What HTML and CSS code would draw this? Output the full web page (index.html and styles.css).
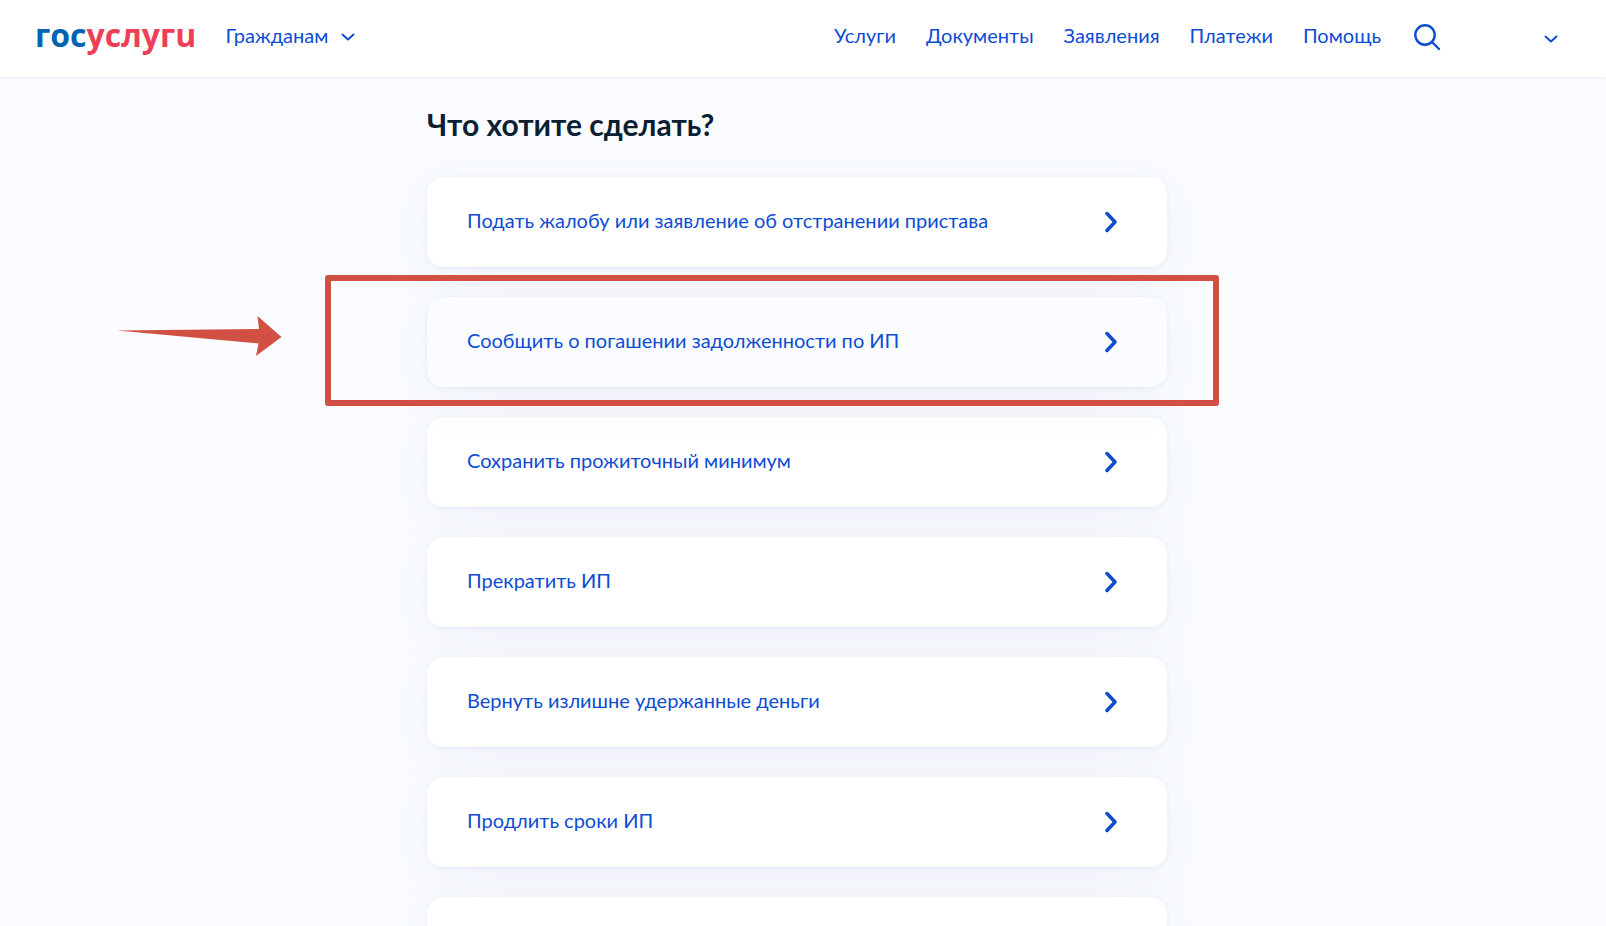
FILE: index.html
```
<!DOCTYPE html>
<html lang="ru">
<head>
    <meta charset="UTF-8">
    <title>Госуслуги</title>
    <link rel="stylesheet" href="styles.css">
</head>
<body>
    <header class="header">
        <a href="#" class="logo" aria-label="Госуслуги"><span class="logo-blue">гос</span>услугu</a>
        <button type="button" class="role">
            Гражданам
            <svg class="arrow" viewBox="0 0 14 8"><path d="M1.5 1.5 7 6.5 12.5 1.5"/></svg>
        </button>

        <nav class="menu">
            <a href="#">Услуги</a>
            <a href="#">Документы</a>
            <a href="#">Заявления</a>
            <a href="#">Платежи</a>
            <a href="#">Помощь</a>
        </nav>
        <button type="button" class="search" aria-label="Поиск">
            <svg viewBox="0 0 28 28"><circle cx="12" cy="12" r="9.7"/><path d="M19 19l7 7"/></svg>
        </button>
        <button type="button" class="profile" aria-label="Профиль">
            <svg class="arrow" viewBox="0 0 14 8"><path d="M1.5 1.5 7 6.5 12.5 1.5"/></svg>
        </button>
    </header>

    <main class="content">
        <h1>Что хотите сделать?</h1>
        <ul class="list">
            <li>
                <a href="#" class="card">Подать жалобу или заявление об отстранении пристава
                    <svg viewBox="0 0 12 22"><path d="M2 2.500l8 8.500-8 8.500"/></svg></a>
            </li>
            <li class="marked">
                <a href="#" class="card active">Сообщить о погашении задолженности по ИП
                    <svg viewBox="0 0 12 22"><path d="M2 2.500l8 8.500-8 8.500"/></svg></a>
                <span class="frame"></span>
                <svg class="pointer" viewBox="0 0 166 40"><path d="M0 14.500 142 13 140.500 0 164.500 21 139 40 141.500 27.500Z"/></svg>
            </li>
            <li>
                <a href="#" class="card">Сохранить прожиточный минимум
                    <svg viewBox="0 0 12 22"><path d="M2 2.500l8 8.500-8 8.500"/></svg></a>
            </li>
            <li>
                <a href="#" class="card">Прекратить ИП
                    <svg viewBox="0 0 12 22"><path d="M2 2.500l8 8.500-8 8.500"/></svg></a>
            </li>
            <li>
                <a href="#" class="card">Вернуть излишне удержанные деньги
                    <svg viewBox="0 0 12 22"><path d="M2 2.500l8 8.500-8 8.500"/></svg></a>
            </li>
            <li>
                <a href="#" class="card">Продлить сроки ИП
                    <svg viewBox="0 0 12 22"><path d="M2 2.500l8 8.500-8 8.500"/></svg></a>
            </li>
            <li>
                <a href="#" class="card"></a>
            </li>
        </ul>
    </main>
</body>
</html>
```
FILE: styles.css
```
* {
    box-sizing: border-box;
}

html {
    height: 100%;
    overflow: hidden;
}

body {
    margin: 0;
    height: 100%;
    overflow: hidden;
    background-color: #fafcff;
    color: #0b1f33;
    font-family: Lato, "Open Sans", sans-serif;
    font-size: 20px;
    line-height: 24px;
}

a {
    color: #0d4cd3;
    text-decoration: none;
}

button {
    padding: 0;
    border: none;
    background: none;
    color: #0d4cd3;
    font: inherit;
    cursor: pointer;
}

svg {
    display: block;
    fill: none;
    stroke: #0d4cd3;
    stroke-linecap: round;
    stroke-linejoin: round;
}

/* шапка */
.header {
    position: relative;
    display: flex;
    align-items: center;
    height: 77px;
    padding: 0 48px 8px 35px;
    background-color: #fff;
    box-shadow: 0 1px 4px rgba(30, 80, 180, 0.08);
}

.logo {
    margin-right: 29px;
    color: #ee3f58;
    font-family: "Open Sans", sans-serif;
    font-size: 32px;
    font-weight: 700;
    line-height: 36px;
}

.logo-blue {
    color: #0065b1;
}

.role {
    display: flex;
    align-items: center;
    gap: 13px;
}

.arrow {
    width: 14px;
    height: 8px;
    margin-top: 4px;
    stroke-width: 2;
}

.menu {
    display: flex;
    gap: 30px;
    margin-left: auto;
}

.search {
    margin: 0 103px 0 32px;
    padding-top: 4px;
}

.search svg {
    width: 28px;
    height: 28px;
    stroke-width: 2.4;
}

.profile {
    padding-top: 4px;
}

/* список действий */
.content {
    width: 740px;
    margin: 0 auto;
    padding-top: 27px;
    /* место под полосу прокрутки */
    position: relative;
    right: 6px;
}

h1 {
    margin: 0 0 33px;
    font-size: 30px;
    font-weight: 700;
    line-height: 40px;
}

.list {
    display: grid;
    gap: 30px;
    margin: 0;
    padding: 0;
    list-style: none;
}

.card {
    display: flex;
    align-items: center;
    justify-content: space-between;
    height: 90px;
    padding: 0 50px 4px 40px;
    border-radius: 16px;
    background-color: #fff;
    box-shadow: 0 1px 4px rgba(60, 110, 220, 0.1), 0 10px 60px rgba(60, 90, 150, 0.06);
}

.card svg {
    width: 12px;
    height: 22px;
    margin-top: 4px;
    stroke-width: 3.5;
}

.card.active {
    background-color: #fafcff;
}

/* выделение нужного пункта */
.marked {
    position: relative;
    z-index: 1;
}

.frame {
    position: absolute;
    inset: -22px -52px -19px -102px;
    border: 6px solid #d25043;
    border-radius: 3px;
}

.pointer {
    position: absolute;
    top: 19px;
    left: -310px;
    width: 166px;
    height: 40px;
    fill: #d25043;
    stroke: none;
}
```
